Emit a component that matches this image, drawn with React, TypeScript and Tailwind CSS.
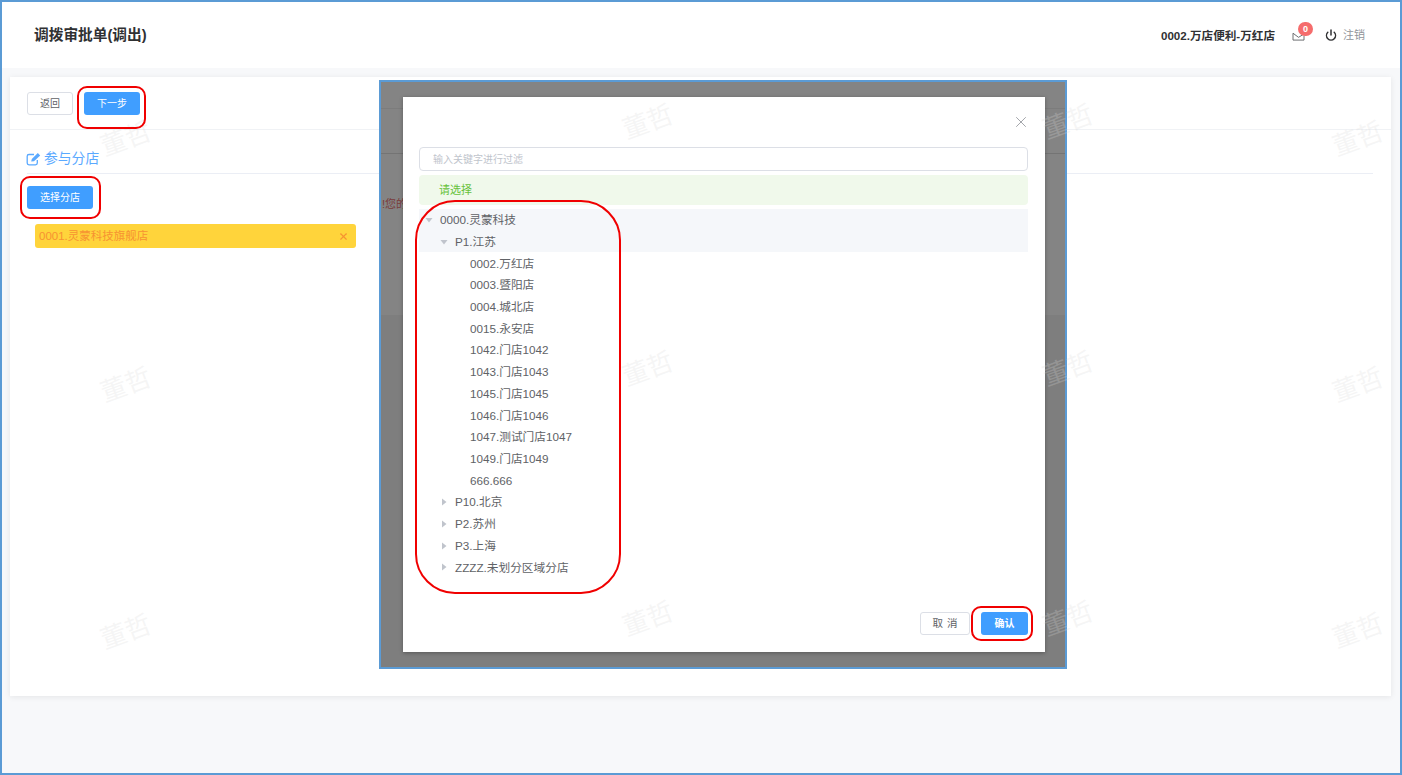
import { Power, X } from "lucide-react";

const watermarks = [
  "left-[98px] top-[120px]",
  "left-[620px] top-[103px]",
  "left-[1330px] top-[120px]",
  "left-[98px] top-[366px]",
  "left-[620px] top-[350px]",
  "left-[1330px] top-[366px]",
  "left-[98px] top-[613px]",
  "left-[620px] top-[600px]",
  "left-[1330px] top-[612px]",
  "left-[1040px] top-[103px]",
  "left-[1040px] top-[350px]",
  "left-[1040px] top-[600px]",
];

const annotations = [
  "left-[75px] top-[84px] w-[69px] h-[43px] rounded-[10px]",
  "left-[18px] top-[174px] w-[81px] h-[43px] rounded-[10px]",
  "left-[413px] top-[198px] w-[206px] h-[394px] rounded-[40px]",
  "left-[969px] top-[604px] w-[62px] h-[35px] rounded-[10px]",
];

const stores = [
  "0002.万红店",
  "0003.暨阳店",
  "0004.城北店",
  "0015.永安店",
  "1042.门店1042",
  "1043.门店1043",
  "1045.门店1045",
  "1046.门店1046",
  "1047.测试门店1047",
  "1049.门店1049",
  "666.666",
];

const regions = ["P10.北京", "P2.苏州", "P3.上海", "ZZZZ.未划分区域分店"];

function Caret({ open }: { open?: boolean }) {
  return (
    <svg viewBox="0 0 8 8" className="h-2 w-2 shrink-0 fill-[#c0c4cc]">
      {open ? <path d="M0.5 2 L7.5 2 L4 6.5 Z" /> : <path d="M2 0.5 L6.5 4 L2 7.5 Z" />}
    </svg>
  );
}

function TreeRow({ label, indent, caret, open }: { label: string; indent: string; caret?: boolean; open?: boolean }) {
  return (
    <div className={`flex h-[21.72px] items-center gap-[7px] ${indent}`}>
      {caret ? <Caret open={open} /> : null}
      <span>{label}</span>
    </div>
  );
}

function EditIcon() {
  return (
    <svg viewBox="0 0 15 14" className="-ml-px h-[14px] w-[15px] fill-none stroke-[#5aa9ff]">
      <path d="M8 2.5 H3 A1.8 1.8 0 0 0 1.2 4.3 V11 A1.8 1.8 0 0 0 3 12.8 H9.5 A1.8 1.8 0 0 0 11.3 11 V8" strokeWidth="1.3" />
      <path d="M5.2 9.6 L5.8 7 L11.8 1 L14.2 3.4 L8 9.2 Z" fill="#5aa9ff" stroke="none" />
    </svg>
  );
}

function StoreDialog() {
  return (
    <div className="absolute left-[377px] top-[78px] z-10 h-[589px] w-[688px] border-2 border-[#5b9bd5] bg-[#7e7e7e] pl-[22px] pt-[15px]">
      <div className="absolute inset-x-0 top-0 h-[233px] bg-[#848484]" />
      <div className="absolute inset-x-0 top-[26px] h-px bg-[#7c7c7c]" />
      <div className="absolute inset-x-0 top-[71px] h-px bg-[#747474]" />
      <div className="absolute left-[1px] top-[114px] text-[11px] leading-4 text-[#7a3b3b]">!您的</div>
      <div className="relative h-[555px] w-[642px] bg-white pl-4 pr-[17px] shadow-[0_1px_4px_rgba(0,0,0,0.3)]">
        <div className="flex h-[50px] items-start justify-end pt-4">
          <X className="-mr-[2px] h-[18px] w-[18px] text-[#909399]" strokeWidth={1.1} />
        </div>
        <input
          placeholder="输入关键字进行过滤"
          className="mb-1 block h-6 w-full rounded border border-[#dcdfe6] px-[13px] text-[10px] outline-none placeholder:text-[#c0c4cc]"
        />
        <div className="mb-1 flex h-[30px] items-center rounded-sm bg-[#f0f9eb] pl-5 text-[11px] text-[#67c23a]">请选择</div>
        <div className="text-[11.7px] text-[#606266]">
          <div className="bg-[#f5f7fa]">
            <TreeRow label="0000.灵蒙科技" indent="pl-[6px]" caret open />
            <TreeRow label="P1.江苏" indent="pl-[21px]" caret open />
          </div>
          {stores.map((s) => (
            <TreeRow key={s} label={s} indent="pl-[51px]" />
          ))}
          {regions.map((r) => (
            <TreeRow key={r} label={r} indent="pl-[21px]" caret />
          ))}
        </div>
        <div className="mt-[34px] flex justify-end gap-[11px]">
          <button className="h-[23px] w-[50px] rounded-[3px] border border-[#dcdfe6] bg-white pl-[4px] text-[10.5px] tracking-[4px] text-[#606266]">取消</button>
          <button className="h-[23px] w-[47px] rounded-[3px] bg-[#409eff] text-[10px] font-bold text-white">确认</button>
        </div>
      </div>
    </div>
  );
}

export default function App() {
  return (
    <div
      className="relative h-[775px] w-[1402px] overflow-hidden border-2 border-[#5b9bd5] bg-[#f7f8fa]"
      style={{ fontFamily: '"Liberation Sans", "Noto Sans CJK SC", sans-serif' }}
    >
      <header className="flex h-[66px] items-center justify-between bg-white pl-8 pr-[35px]">
        <h1 className="text-[14.7px] font-bold text-[#303133]">调拨审批单(调出)</h1>
        <div className="flex items-center">
          <span className="pt-[2px] text-[11.6px] font-bold text-[#303133]">0002.万店便利-万红店</span>
          <div className="relative ml-[17px] mr-[21px] pt-[2px]">
            <svg viewBox="0 0 14 12" className="h-[11px] w-[13px] fill-none stroke-[#606266]">
              <path d="M1 3.5 V11 H13 V6" />
              <path d="M1 3.5 L7 8 L12 5" />
            </svg>
            <span className="absolute -right-[8px] -top-[6px] flex h-[14px] w-[15px] items-center justify-center rounded-full bg-[#f56c6c] text-[9px] font-bold text-white">0</span>
          </div>
          <Power className="mr-[6px] -ml-[1px] h-3 w-3 text-[#303133]" strokeWidth={3} />
          <span className="text-[11px] text-[#909399]">注销</span>
        </div>
      </header>

      <main className="px-2 pt-[9px]">
        <section className="h-[619px] w-[1381px] bg-white shadow-[0_1px_6px_rgba(0,0,0,0.08)]">
          <div className="flex h-[53px] items-center gap-[11px] border-b border-[#f0f2f5] pl-[17px]">
            <button className="h-[23px] w-[46px] rounded-[3px] border border-[#dcdfe6] bg-white text-[10px] text-[#606266]">返回</button>
            <button className="h-[23px] w-[56px] rounded-[3px] bg-[#409eff] text-[10px] text-white">下一步</button>
          </div>
          <div className="pl-[17px] pr-[18px] pt-[21px]">
            <div className="flex h-[23px] items-center gap-[3px] border-b border-[#ebeef5] pb-[6px] text-[13.8px] text-[#5aa9ff]">
              <EditIcon />
              <span>参与分店</span>
            </div>
            <button className="mt-[12px] block h-[23px] w-[66px] rounded-[3px] bg-[#409eff] text-[10px] text-white">选择分店</button>
            <div className="ml-2 mt-[15px] flex h-6 w-[321px] items-center justify-between rounded-[3px] bg-[#ffd43b] pl-1 pr-[7px] pt-[1px] text-[11.5px] text-[#f79232]">
              <span>0001.灵蒙科技旗舰店</span>
              <X className="h-[11px] w-[11px]" strokeWidth={2.5} />
            </div>
          </div>
        </section>
      </main>

      <StoreDialog />

      {watermarks.map((pos) => (
        <span
          key={pos}
          className={`absolute z-20 -rotate-[20deg] select-none text-[26px] leading-[34px] text-[#d8d8d8]/25 ${pos}`}
        >
          董哲
        </span>
      ))}

      {annotations.map((pos) => (
        <div key={pos} className={`absolute z-30 border-2 border-[#f00000] ${pos}`} />
      ))}
    </div>
  );
}
